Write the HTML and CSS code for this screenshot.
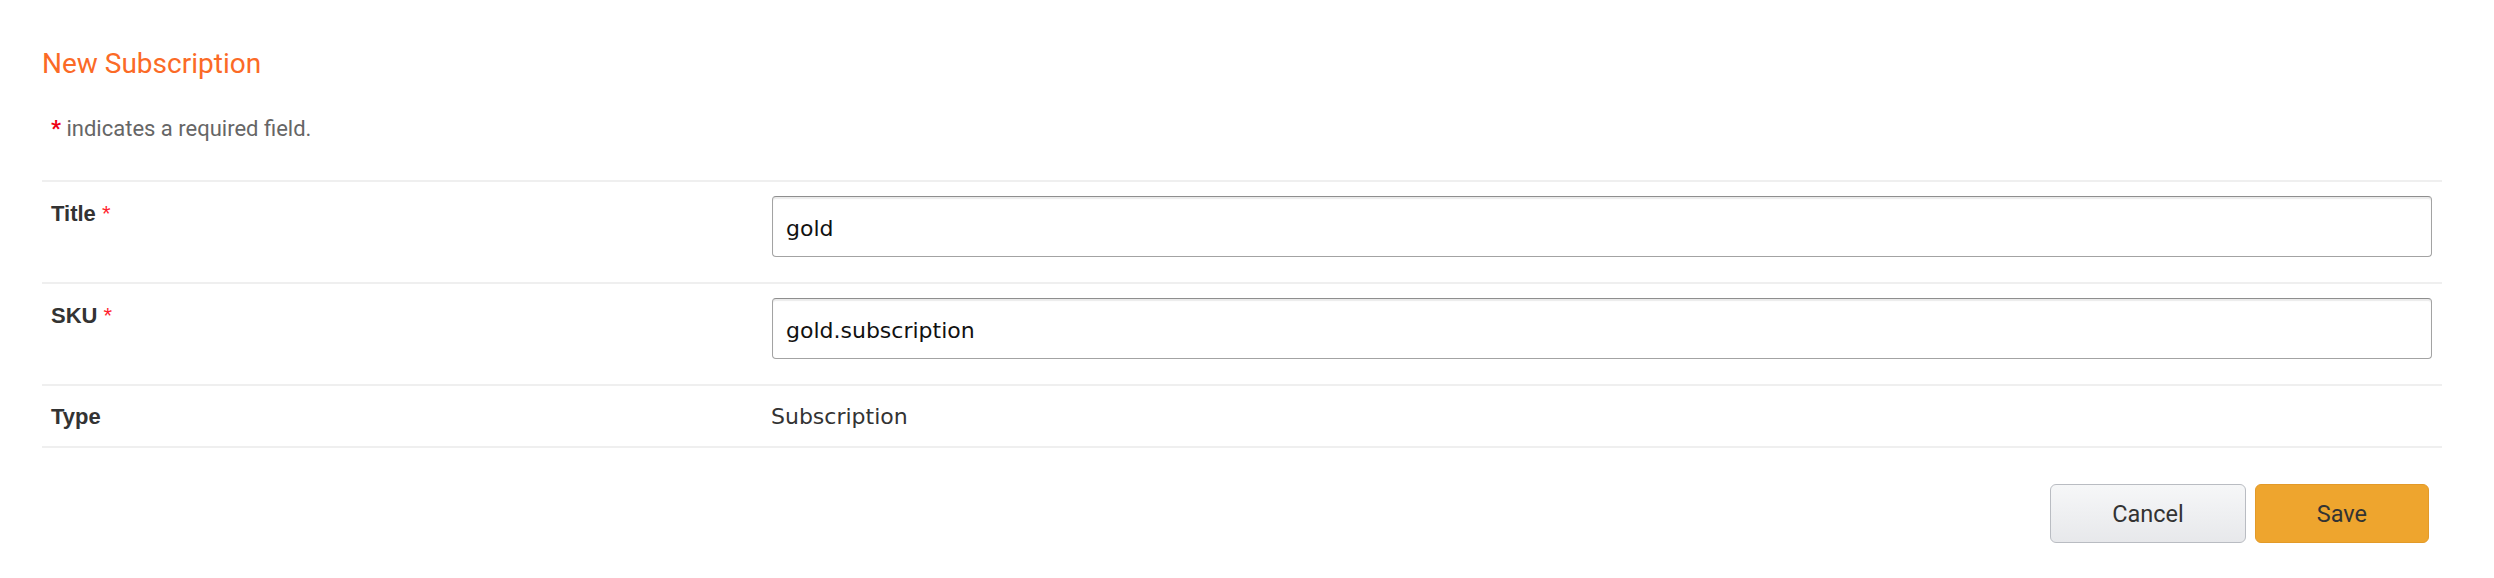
FILE: index.html
```html
<!DOCTYPE html>
<html lang="en">
<head>
<meta charset="utf-8">
<title>New Subscription</title>
<link rel="stylesheet" href="styles.css">
</head>
<body>
<div class="page">
  <h2 class="heading">New Subscription</h2>
  <p class="note"><span class="req-note">*</span> indicates a required field.</p>
  <div class="form">
    <div class="row row-input">
      <div class="label">Title <span class="req">*</span></div>
      <div class="value"><input class="field" type="text" value="gold"></div>
    </div>
    <div class="row row-input">
      <div class="label">SKU <span class="req">*</span></div>
      <div class="value"><input class="field" type="text" value="gold.subscription"></div>
    </div>
    <div class="row row-static">
      <div class="label">Type</div>
      <div class="value text">Subscription</div>
    </div>
  </div>
  <div class="actions">
    <button class="btn btn-cancel" type="button">Cancel</button>
    <button class="btn btn-save" type="button">Save</button>
  </div>
</div>
</body>
</html>
```
FILE: styles.css
```css
html, body {
  margin: 0;
  padding: 0;
  background: #ffffff;
}

.page {
  padding: 47px 52px 0 42px;
  font-family: Roboto, "Liberation Sans", sans-serif;
}

.heading {
  margin: 0;
  font-family: Roboto, sans-serif;
  font-weight: 400;
  font-size: 28px;
  line-height: 34px;
  color: #fb6a26;
}

.note {
  margin: 35px 0 0 0;
  padding-left: 9px;
  font-family: Roboto, sans-serif;
  font-size: 22px;
  line-height: 26px;
  color: #666666;
}

.req-note {
  color: #ee0011;
  font-weight: 700;
}

.form {
  margin-top: 38px;
  border-bottom: 2px solid #efefef;
}

.row {
  display: grid;
  grid-template-columns: 720px 1fr;
  border-top: 2px solid #efefef;
}

.label {
  padding: 19px 10px 0 9px;
  font-family: "Liberation Sans", Arial, sans-serif;
  font-weight: 700;
  font-size: 22px;
  line-height: 25px;
  color: #333333;
}

.req {
  color: #ff1f2f;
  font-weight: 400;
}

.row-input .value {
  padding: 14px 10px 25px 10px;
}

.row-static .label {
  padding-top: 18px;
  padding-bottom: 17px;
}

.row-static .value {
  padding: 18px 10px 17px 9px;
}

.text {
  font-family: "DejaVu Sans", Verdana, sans-serif;
  font-size: 22px;
  line-height: 25px;
  color: #333333;
}

.field {
  display: block;
  box-sizing: border-box;
  width: 100%;
  height: 61px;
  margin: 0;
  padding: 3px 13px 0 13px;
  border: 1px solid #a3a3a3;
  border-top-color: #8e8e8e;
  border-radius: 4px;
  box-shadow: inset 0 2px 1px rgba(0, 0, 0, 0.08);
  background: #ffffff;
  font-family: "DejaVu Sans", Verdana, sans-serif;
  font-size: 22px;
  color: #111111;
  outline: none;
}

.actions {
  display: flex;
  justify-content: flex-end;
  gap: 9px;
  padding: 36px 13px 0 0;
}

.btn {
  box-sizing: border-box;
  height: 59px;
  padding: 0 61px;
  border-radius: 6px;
  font-family: Roboto, sans-serif;
  font-size: 23.5px;
  color: #333333;
  cursor: pointer;
}

.btn-cancel {
  border: 1.5px solid #b9bcc2;
  background: linear-gradient(#f6f7f8, #e7e8eb);
}

.btn-save {
  border: 1.5px solid #e39a28;
  background: #eea52e;
}
```
